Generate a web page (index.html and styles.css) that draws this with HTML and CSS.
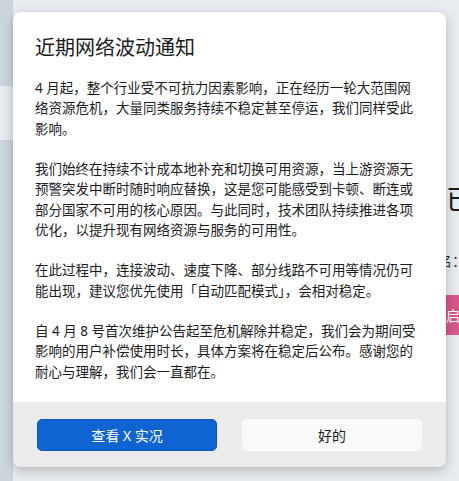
FILE: index.html
```html
<!DOCTYPE html>
<html lang="zh-CN">
<head>
  <meta charset="UTF-8" />
  <meta name="viewport" content="width=device-width, initial-scale=1.0"/>
  <title>近期网络波动通知</title>
  <link rel="stylesheet" href="styles.css">
</head>
<body>

<div class="app">
  <aside class="sidebar">
    <div class="side-item active"></div>
  </aside>
  <main class="main">
    <div class="main-left"></div>
    <section class="status">
      <h2 class="status-title">已开启</h2>
      <div class="status-label">用户名：</div>
      <button class="status-btn">开启</button>
    </section>
  </main>
</div>

<div class="dialog">
  <div class="dialog-body">
    <h1 class="dialog-title">近期网络波动通知</h1>
    <p>4 月起，整个行业受不可抗力因素影响，正在经历一轮大范围网络资源危机，大量同类服务持续不稳定甚至停运，我们同样受此影响。</p>
    <p>我们始终在持续不计成本地补充和切换可用资源，当上游资源无预警突发中断时随时响应替换，这是您可能感受到卡顿、断连或部分国家不可用的核心原因。与此同时，技术团队持续推进各项优化，以提升现有网络资源与服务的可用性。</p>
    <p>在此过程中，连接波动、速度下降、部分线路不可用等情况仍可能出现，建议您优先使用「自动匹配模式」，会相对稳定。</p>
    <p>自 4 月 8 号首次维护公告起至危机解除并稳定，我们会为期间受影响的用户补偿使用时长，具体方案将在稳定后公布。感谢您的耐心与理解，我们会一直都在。</p>
  </div>
  <div class="dialog-footer">
    <button class="btn btn-primary">查看 X 实况</button>
    <button class="btn">好的</button>
  </div>
</div>

</body>
</html>
```

FILE: styles.css
```css
* {
  box-sizing: border-box;
  margin: 0;
  padding: 0;
}
body {
  font-family: "Noto Sans", "Noto Sans CJK SC", sans-serif;
  background-color: #e8ecf0;
  color: #1c1c1c;
  overflow: hidden;
}
.app {
  display: grid;
  grid-template-columns: 13px 1fr;
  height: 100vh;
}
.sidebar {
  background-color: #ccd5de;
  padding-top: 86px;
}
.side-item {
  height: 54px;
}
.side-item.active {
  background-color: #e6ebf0;
}
.main {
  display: grid;
  grid-template-columns: 385px 1fr;
  background-color: #e8ecf0;
}
.status {
  padding-top: 181px;
}
.status-title {
  font-size: 28px;
  font-weight: normal;
  line-height: 36px;
  margin-left: 48px;
  white-space: nowrap;
  color: #1a1a1a;
}
.status-label {
  font-size: 14px;
  line-height: 20px;
  margin: 34px 0 0 12px;
  white-space: nowrap;
  color: #333;
}
.status-btn {
  display: block;
  margin-top: 24px;
  width: 96px;
  height: 40px;
  border: none;
  border-radius: 4px;
  background-color: #d8578a;
  color: #fff;
  font-family: inherit;
  font-size: 14px;
}

.dialog {
  position: absolute;
  top: 12px;
  left: 13px;
  width: 433px;
  background-color: #fff;
  border-radius: 8px;
  overflow: hidden;
  box-shadow: 0 4px 12px rgba(0,0,0,0.22), 0 0 2px rgba(0,0,0,0.1);
}
.dialog-body {
  padding: 22px 29px 20px 22px;
}
.dialog-title {
  font-size: 20px;
  font-weight: normal;
  line-height: 28px;
  margin-bottom: 16px;
  color: #1a1a1a;
}
.dialog-body p {
  font-size: 13.5px;
  line-height: 20.25px;
  margin-bottom: 20.25px;
}
.dialog-body p:last-child {
  margin-bottom: 0;
}
.dialog-footer {
  display: grid;
  grid-template-columns: 1fr 1fr;
  gap: 25px;
  padding: 17px 24px 16px;
  background-color: #ebebeb;
}
.btn {
  height: 32px;
  border: none;
  border-radius: 5px;
  background-color: #f9f9f9;
  color: #1a1a1a;
  font-family: inherit;
  font-size: 14px;
}
.btn-primary {
  background-color: #0f64d2;
  border: 1px solid #0c58bc;
  color: #fff;
}
```
